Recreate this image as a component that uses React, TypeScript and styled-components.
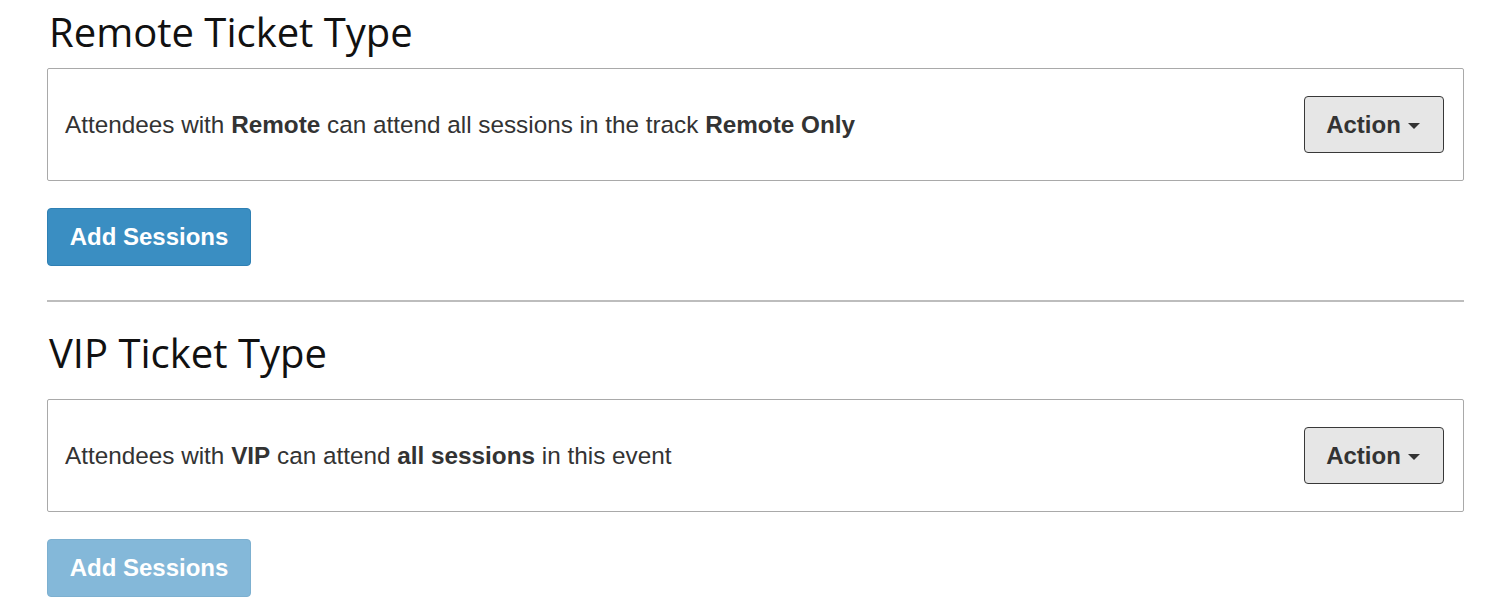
import React from "react";
import styled, { createGlobalStyle } from "styled-components";

const Global = createGlobalStyle`
  html, body { margin: 0; padding: 0; background: #fff; }
  body { font-family: "Liberation Sans", Arial, sans-serif; color: #333; }
`;

const Page = styled.div`
  width: 1417px;
  margin-left: 47px;
  display: flex;
  flex-direction: column;
`;

const Section = styled.section`
  display: flex;
  flex-direction: column;
`;

const Title = styled.h2<{ $top: number; $bottom: number }>`
  margin: ${(p) => p.$top}px 0 ${(p) => p.$bottom}px 2px;
  font-family: "Open Sans", "Noto Sans", sans-serif;
  font-weight: 400;
  font-size: 40px;
  line-height: 44px;
  color: #111;
`;

const Card = styled.div`
  box-sizing: border-box;
  height: 113px;
  border: 1px solid #a9a9a9;
  border-radius: 2px;
  display: flex;
  align-items: center;
  justify-content: space-between;
  padding: 0 19px 0 17px;
`;

const Desc = styled.p`
  margin: 0;
  font-size: 24.3px;
  line-height: 30px;
  color: #333;
  b { font-weight: 700; }
`;

const ActionButton = styled.button`
  box-sizing: border-box;
  width: 140px;
  height: 57px;
  background: #e6e6e6;
  border: 1px solid #383838;
  border-radius: 4px;
  display: flex;
  align-items: center;
  justify-content: center;
  gap: 7px;
  font-family: "Liberation Sans", Arial, sans-serif;
  font-weight: 700;
  font-size: 24px;
  color: #333;
  padding: 0 2px 0 0;
`;

const Caret = styled.span`
  width: 0;
  height: 0;
  border-left: 6px solid transparent;
  border-right: 6px solid transparent;
  border-top: 6px solid #333;
  margin-top: 2px;
`;

const AddButton = styled.button<{ $disabled?: boolean }>`
  box-sizing: border-box;
  align-self: flex-start;
  margin-top: 27px;
  width: 204px;
  height: 58px;
  background: #3a8ec2;
  border: 1px solid #2f80b4;
  border-radius: 4px;
  color: #fff;
  font-family: "Liberation Sans", Arial, sans-serif;
  font-weight: 700;
  font-size: 24px;
  opacity: ${(p) => (p.$disabled ? 0.62 : 1)};
  padding: 0;
`;

const Rule = styled.hr`
  margin: 34px 0 0 0;
  border: 0;
  border-top: 2px solid #bdbdbd;
  height: 0;
`;

export default function App() {
  return (
    <>
      <Global />
      <Page>
        <Section>
          <Title $top={10} $bottom={14}>Remote Ticket Type</Title>
          <Card>
            <Desc>
              Attendees with <b>Remote</b> can attend all sessions in the track <b>Remote Only</b>
            </Desc>
            <ActionButton>
              Action <Caret />
            </ActionButton>
          </Card>
          <AddButton>Add Sessions</AddButton>
        </Section>
        <Rule />
        <Section>
          <Title $top={29} $bottom={24}>VIP Ticket Type</Title>
          <Card>
            <Desc>
              Attendees with <b>VIP</b> can attend <b>all sessions</b> in this event
            </Desc>
            <ActionButton>
              Action <Caret />
            </ActionButton>
          </Card>
          <AddButton $disabled disabled>Add Sessions</AddButton>
        </Section>
      </Page>
    </>
  );
}
